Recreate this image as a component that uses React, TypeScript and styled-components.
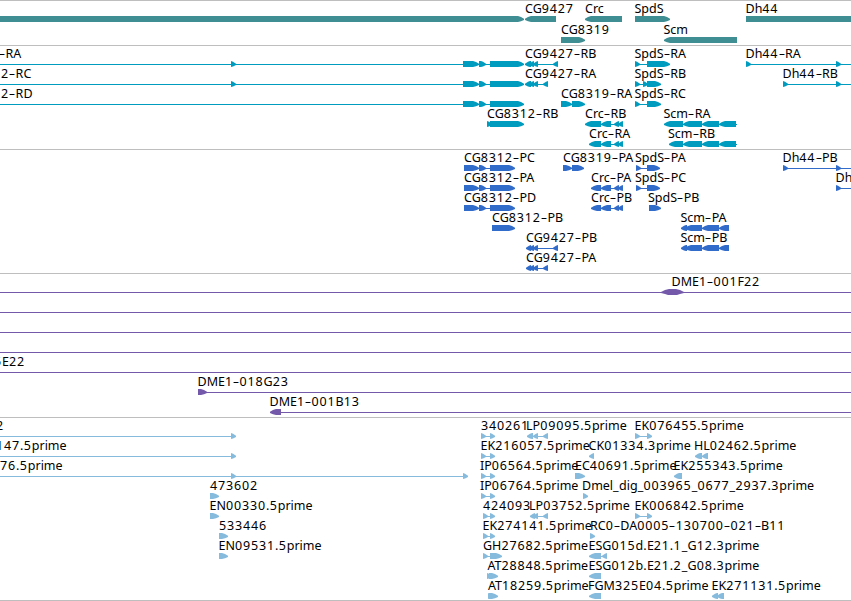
import styled, { createGlobalStyle } from "styled-components"

type Dir = "r" | "l" | "both"
type Part = [number, number, Dir?]

interface Item {
    name?: string
    at?: number
    line?: [number, number]
    parts?: Part[]
}

interface TrackData {
    id: string
    color: string
    size: number
    gap?: number
    rows: Item[][]
}

const VIEW = 851
const EDGE = 860

// shared exon groups
const cg8312: Part[] = [[463, 479], [479, 486], [490, 524]]
const cg8312p: Part[] = [[464, 479], [479, 486], [490, 515]]
const crcTail: Part[] = [[601, 611, "l"], [614, 619, "l"], [618, 623, "l"]]
const scmTail: Part[] = [[683, 702, "l"], [702, 719, "l"], [719, 736, "l"]]
const scmP: Part[] = [[681, 687, "l"], [685, 702, "l"], [702, 719, "l"], [719, 729, "l"]]
const cg9427: Part[] = [[525, 531, "l"], [529, 534, "l"], [533, 538, "l"]]
const cg9427p: Part[] = [[526, 531, "l"], [529, 534, "l"], [533, 538, "l"]]

const tracks: TrackData[] = [
    {
        id: "genes", color: "#3e8e93", size: 45, gap: 1,
        rows: [
            [
                { parts: [[-5, 524]] },
                { name: "CG9427", at: 525, parts: [[525, 556, "l"]] },
                { name: "Crc", at: 585, parts: [[585, 622, "l"]] },
                { name: "SpdS", at: 634.5, parts: [[635, 670]] },
                { name: "Dh44", at: 745.5, parts: [[746, EDGE]] },
            ],
            [
                { name: "CG8319", at: 561, parts: [[561, 585]] },
                { name: "Scm", at: 663.5, parts: [[664, 737, "l"]] },
            ],
        ],
    },
    {
        id: "transcripts", color: "#009cbf", size: 104,
        rows: [
            [
                { name: "-RA", at: -1, line: [-5, 524], parts: [[231, 236], ...cg8312] },
                { name: "CG9427-RB", at: 525, line: [525, 558], parts: [...cg9427, [553, 558, "l"]] },
                { name: "SpdS-RA", at: 634.5, line: [635, 670], parts: [[635, 640], [647, 670]] },
                { name: "Dh44-RA", at: 745.5, line: [746, EDGE], parts: [[746, 751], [836, 841]] },
            ],
            [
                { name: "2-RC", at: 1, line: [-5, 524], parts: [[231, 236], ...cg8312] },
                { name: "CG9427-RA", at: 525, line: [525, 548], parts: [...cg9427, [543, 548, "l"]] },
                { name: "SpdS-RB", at: 634.5, line: [635, 661], parts: [[635, 640], [643, 648], [647, 661]] },
                { name: "Dh44-RB", at: 782.5, line: [783, EDGE], parts: [[783, 788], [836, 841]] },
            ],
            [
                { name: "2-RD", at: 1, line: [-5, 524], parts: cg8312 },
                { name: "CG8319-RA", at: 561, line: [561, 585], parts: [[561, 572], [572, 585]] },
                { name: "SpdS-RC", at: 634.5, line: [635, 661], parts: [[635, 640], [647, 661]] },
            ],
            [
                { name: "CG8312-RB", at: 487, line: [487, 524], parts: [[487, 492], [490, 524]] },
                { name: "Crc-RB", at: 585, line: [585, 623], parts: [[585, 601, "l"], ...crcTail] },
                { name: "Scm-RA", at: 663.5, line: [664, 737], parts: [[664, 683, "l"], ...scmTail] },
            ],
            [
                { name: "Crc-RA", at: 589, line: [589, 623], parts: [[589, 601, "l"], ...crcTail] },
                { name: "Scm-RB", at: 668, line: [669, 737], parts: [[669, 683, "l"], ...scmTail] },
            ],
        ],
    },
    {
        id: "proteins", color: "#326ccb", size: 124,
        rows: [
            [
                { name: "CG8312-PC", at: 464, line: [464, 515], parts: cg8312p },
                { name: "CG8319-PA", at: 563, line: [563, 584], parts: [[563, 572], [572, 584]] },
                { name: "SpdS-PA", at: 635, line: [636, 660], parts: [[636, 641], [647, 660]] },
                { name: "Dh44-PB", at: 782.5, line: [783, EDGE], parts: [[783, 788], [836, 841]] },
            ],
            [
                { name: "CG8312-PA", at: 464, line: [464, 515], parts: cg8312p },
                { name: "Crc-PA", at: 591, line: [591, 623], parts: [[591, 601, "l"], ...crcTail] },
                { name: "SpdS-PC", at: 635, line: [636, 660], parts: [[636, 641], [647, 660]] },
                { name: "Dh", at: 835.5, line: [836, EDGE], parts: [[836, 841]] },
            ],
            [
                { name: "CG8312-PD", at: 464, line: [464, 515], parts: cg8312p },
                { name: "Crc-PB", at: 591, line: [591, 623], parts: [[591, 601, "l"], ...crcTail] },
                { name: "SpdS-PB", at: 648, parts: [[649, 661]] },
            ],
            [
                { name: "CG8312-PB", at: 492, parts: [[492, 515]] },
                { name: "Scm-PA", at: 680.5, line: [681, 729], parts: scmP },
            ],
            [
                { name: "CG9427-PB", at: 526, line: [526, 558], parts: [...cg9427p, [553, 558, "l"]] },
                { name: "Scm-PB", at: 680.5, line: [681, 729], parts: scmP },
            ],
            [
                { name: "CG9427-PA", at: 526, line: [526, 548], parts: [...cg9427p, [543, 548, "l"]] },
            ],
        ],
    },
    {
        id: "bacs", color: "#7459ab", size: 144,
        rows: [
            [{ name: "DME1-001F22", at: 671.5, line: [-5, EDGE], parts: [[661, 684, "both"]] }],
            [{ line: [-5, EDGE] }],
            [{ line: [-5, EDGE] }],
            [{ line: [-5, EDGE] }],
            [{ name: "5E22", at: -6, line: [-5, EDGE] }],
            [{ name: "DME1-018G23", at: 197.5, line: [198, EDGE], parts: [[198, 207]] }],
            [{ name: "DME1-001B13", at: 269.5, line: [270, EDGE], parts: [[270, 281, "l"]] }],
        ],
    },
    {
        id: "ests", color: "#87bbdd", size: 183,
        rows: [
            [
                { name: "2", at: -4, line: [-5, 236], parts: [[231, 236]] },
                { name: "340261", at: 481, line: [481, 495], parts: [[481, 486], [490, 495]] },
                { name: "LP09095.5prime", at: 526, line: [527, 548], parts: [[527, 533, "l"], [533, 538, "l"], [543, 548, "l"]] },
                { name: "EK076455.5prime", at: 634.5, line: [635, 652], parts: [[635, 640], [647, 652]] },
            ],
            [
                { name: "147.5prime", at: -4, line: [-5, 236], parts: [[231, 236]] },
                { name: "EK216057.5prime", at: 480.5, line: [481, 495], parts: [[481, 486], [490, 495]] },
                { name: "CK01334.3prime", at: 588.5, parts: [[589, 594, "l"]] },
                { name: "HL02462.5prime", at: 694, line: [695, 708], parts: [[695, 702, "l"], [702, 708, "l"]] },
            ],
            [
                { name: "76.5prime", at: 0, line: [-5, 468], parts: [[231, 236], [463, 468]] },
                { name: "IP06564.5prime", at: 480, line: [481, 495], parts: [[481, 486], [490, 495]] },
                { name: "EC40691.5prime", at: 575, parts: [[575, 585]] },
                { name: "EK255343.5prime", at: 673.5, parts: [[674, 682, "l"]] },
            ],
            [
                { name: "473602", at: 210, parts: [[210, 219]] },
                { name: "IP06764.5prime", at: 480, line: [481, 495], parts: [[481, 486], [490, 495]] },
                { name: "Dmel_dig_003965_0677_2937.3prime", at: 582, parts: [[583, 588]] },
            ],
            [
                { name: "EN00330.5prime", at: 209.5, parts: [[210, 219]] },
                { name: "424093", at: 483, line: [483, 495], parts: [[483, 488], [490, 495]] },
                { name: "LP03752.5prime", at: 529, line: [530, 548], parts: [[530, 535, "l"], [533, 538, "l"], [543, 548, "l"]] },
                { name: "EK006842.5prime", at: 634.5, line: [635, 652], parts: [[635, 640], [647, 652]] },
            ],
            [
                { name: "533446", at: 219, parts: [[219, 228]] },
                { name: "EK274141.5prime", at: 482.5, line: [483, 495], parts: [[483, 488], [490, 495]] },
                { name: "RC0-DA0005-130700-021-B11", at: 590, parts: [[590, 595]] },
            ],
            [
                { name: "EN09531.5prime", at: 218.5, parts: [[219, 228]] },
                { name: "GH27682.5prime", at: 483, line: [483, 502], parts: [[483, 488], [490, 502]] },
                { name: "ESG015d.E21.1_G12.3prime", at: 588.5, line: [589, 607], parts: [[589, 601, "l"], [602, 607, "l"]] },
            ],
            [
                { name: "AT28848.5prime", at: 487.5, parts: [[487, 492], [489, 498]] },
                { name: "ESG012b.E21.2_G08.3prime", at: 588.5, parts: [[589, 601, "l"]] },
            ],
            [
                { name: "AT18259.5prime", at: 488, parts: [[488, 493], [489, 498]] },
                { name: "FGM325E04.5prime", at: 588, parts: [[589, 601, "l"]] },
                { name: "EK271131.5prime", at: 711.5, parts: [[712, 718, "l"], [717, 724, "l"]] },
            ],
        ],
    },
]

const outline = ([a, b, dir = "r"]: Part) => {
    const w = b - a
    if (dir === "both") {
        return `${a},3 ${a + 4},1 ${a + 8},0 ${b - 8},0 ${b - 4},1 ${b},3 ${b},4 ${b - 4},5 ${b - 7},6 ${a + 7},6 ${a + 4},5 ${a},4`
    }
    // short parts are almost plain triangles, long ones get a rounded nose
    const head = w > 8 ? 6 : 5
    const mid = w > 8 ? 1 : 0.8
    if (dir === "l") {
        return `${b},0 ${a + head},0 ${a + 3},${mid} ${a},2.7 ${a},4 ${a + 3},${6.3 - mid} ${a + head},6 ${b},6`
    }
    return `${a},0 ${b - head},0 ${b - 3},${mid} ${b},2.7 ${b},4 ${b - 3},${6.3 - mid} ${b - head},6 ${a},6`
}

const spell = (name: string) =>
    name.split(/(\d+|[-._])/).filter(Boolean).map((run, i) => {
        if (run === "-") return <Dash key={i}><i>-</i></Dash>
        if (/^\d/.test(run)) return <Digits key={i}>{run}</Digits>
        if (/[._]/.test(run)) return <Mark key={i}>{run}</Mark>
        return run
    })

const Feature = ({ item, color }: { item: Item; color: string }) => {
    const xs = [...(item.line || []), ...(item.parts || []).flatMap(([a, b]) => [a, b])]
    const start = Math.min(...xs)
    const end = Math.max(...xs)
    return (
        <>
            {item.name && <Label $x={item.at || 0}>{spell(item.name)}</Label>}
            <Glyph $x={start} width={end - start} height={6} viewBox={`${start} 0 ${end - start} 6`} fill={color}>
                {item.line && <rect x={item.line[0]} y={3} width={item.line[1] - item.line[0]} height={1} />}
                {item.parts?.map((part, i) => <polygon key={i} points={outline(part)} />)}
            </Glyph>
        </>
    )
}

const App = () => {
    return (
        <>
            <Global />
            <Browser>
                {tracks.map((track) => (
                    <Track key={track.id} $size={track.size} $gap={track.gap || 0}>
                        {track.rows.map((row, i) => (
                            <Row key={i}>
                                {row.map((item, n) => <Feature key={n} item={item} color={track.color} />)}
                            </Row>
                        ))}
                    </Track>
                ))}
            </Browser>
        </>
    )
}

export default App

const Global = createGlobalStyle`
    body{
        margin: 0;
        background-color: white;
    }
`
const Browser = styled.div`
    box-sizing: border-box;
    width: ${VIEW}px;
    height: 601px;
    overflow: hidden;
    background-color: white;
    border-bottom: 1px solid #bebebe;
    font-family: "Noto Sans", sans-serif;
    font-size: 12.5px;
    color: black;
`
const Track = styled.div<{ $size: number; $gap: number }>`
    box-sizing: border-box;
    height: ${({ $size }) => $size}px;
    padding-top: 1px;
    border-top: 1px solid #bebebe;
    display: flex;
    flex-direction: column;
    gap: ${({ $gap }) => $gap}px;
`
/* every feature shares the two lines of the row and is pushed to its start */
const Row = styled.div`
    display: grid;
    flex-shrink: 0;
    grid-template-columns: ${VIEW}px;
    grid-template-rows: 14px 6px;
`
const Label = styled.span<{ $x: number }>`
    grid-area: 1 / 1;
    justify-self: start;
    margin-left: ${({ $x }) => $x}px;
    line-height: 14px;
    white-space: nowrap;
`
const Digits = styled.span`
    letter-spacing: 0.85px;
`
const Mark = styled.span`
    letter-spacing: 0.4px;
`
const Dash = styled.span`
    display: inline-block;
    width: 6.6px;
    height: 14px;
    vertical-align: top;
    text-align: center;
    i{
        display: inline-block;
        font-style: normal;
        transform: scaleX(1.6);
    }
`
const Glyph = styled.svg<{ $x: number }>`
    grid-area: 2 / 1;
    justify-self: start;
    margin-left: ${({ $x }) => $x}px;
    display: block;
`
